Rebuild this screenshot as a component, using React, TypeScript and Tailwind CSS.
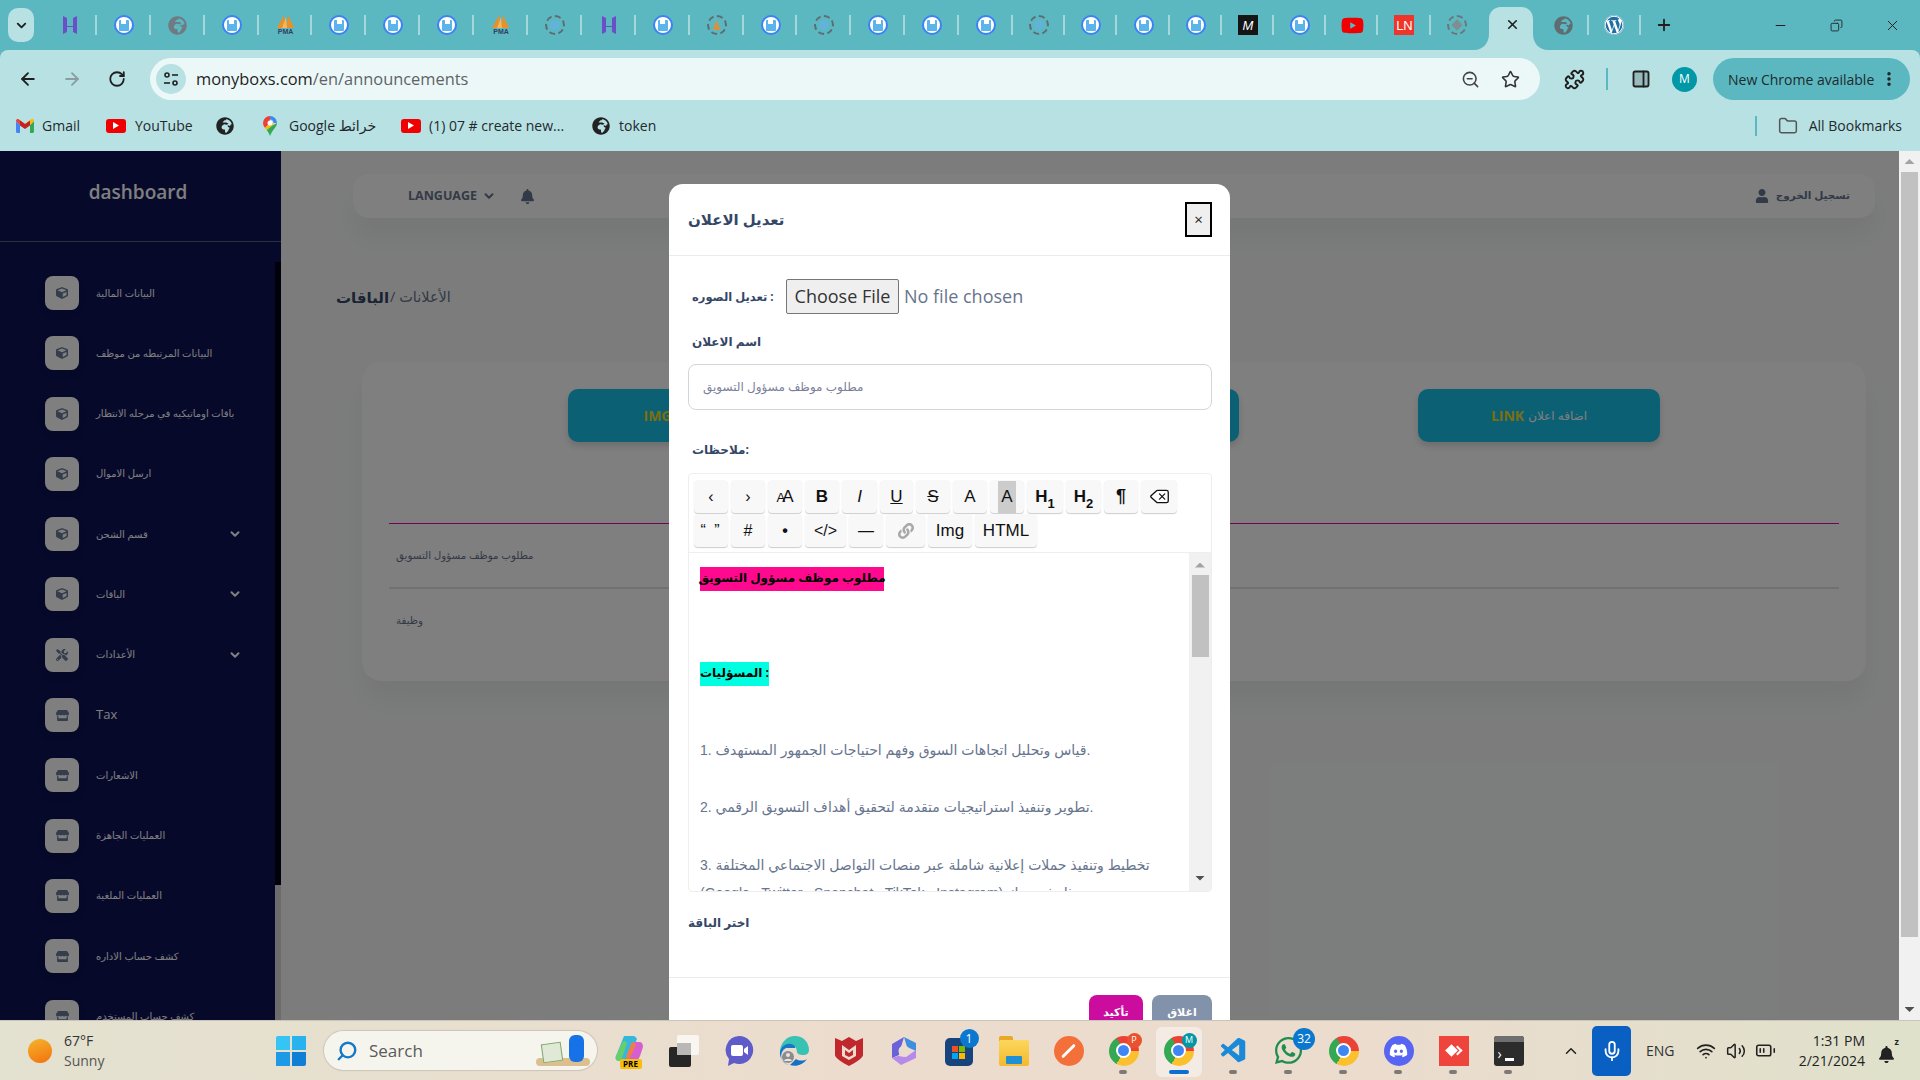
import { ArrowLeft, ArrowRight, RotateCw, Search, ZoomOut, Star, Puzzle, PanelRight, EllipsisVertical, Folder, Plus, Minus, X, Copy, ChevronDown, Delete, Mic, ChevronUp, Wifi, Volume2, BatteryMedium } from "lucide-react";
import { FaBell, FaUser, FaLink, FaCube, FaStore, FaTools, FaWhatsapp, FaDiscord, FaGlobeAfrica, FaWordpress, FaYoutube } from "react-icons/fa";
import { VscVscode } from "react-icons/vsc";

const FloppyIcon = () => (
  <div className="w-[20px] h-[20px] rounded-full bg-white border-2 border-[#3b82f6] flex items-center justify-center">
    <div className="w-[10px] h-[11px] bg-[#5bb5ea] rounded-[1px] flex justify-center">
      <div className="w-[5px] h-[4px] bg-white" />
    </div>
  </div>
);

const DashedIcon = () => (
  <div className="w-[20px] h-[20px] rounded-full border-2 border-dashed border-[#5f6b70] flex items-center justify-center">
    <div className="w-[10px] h-[10px] rounded-full bg-[#62b3d8]" />
  </div>
);

const HIcon = () => (
  <svg width="20" height="20" viewBox="0 0 20 20">
    <path d="M3 1l4 2v5h6V3l4-2v18l-4-2v-5H7v5l-4 2z" fill="#6a4fc9" />
    <path d="M7 8h6v3H7z" fill="#5bb8c1" />
  </svg>
);

const PmaIcon = () => (
  <div className="w-[20px] h-[22px] flex flex-col items-center">
    <svg width="20" height="14" viewBox="0 0 20 14">
      <path d="M1 14L8 1l1 13zM10 14l2-13 6 13z" fill="#e8902a" />
      <path d="M6 14l4-11 1 11z" fill="#f6b65a" />
    </svg>
    <span className="text-[7px] leading-[8px] font-bold text-[#33415c] font-['Liberation_Sans',sans-serif]">PMA</span>
  </div>
);

const tabs = ["h", "f", "g", "f", "p", "f", "f", "f", "p", "d", "h", "f", "d2", "f", "d", "f", "f", "f", "d", "f", "f", "f", "m", "f", "y", "l", "d3"];

const TabIcon = ({ kind }: { kind: string }) => {
  if (kind === "h") return <HIcon />;
  if (kind === "f") return <FloppyIcon />;
  if (kind === "g") return <FaGlobeAfrica size={19} className="text-[#6f7b80]" />;
  if (kind === "p") return <PmaIcon />;
  if (kind === "d") return <DashedIcon />;
  if (kind === "d2")
    return (
      <div className="w-[20px] h-[20px] rounded-full border-2 border-dashed border-[#5f6b70] flex items-center justify-center">
        <div className="w-[8px] h-[10px] bg-[#d9913f] [clip-path:polygon(50%_0,100%_100%,0_100%)]" />
      </div>
    );
  if (kind === "d3")
    return (
      <div className="w-[20px] h-[20px] rounded-full border-2 border-dashed border-[#6d7578] flex items-center justify-center">
        <div className="w-[8px] h-[8px] bg-[#7f8f8f] rotate-45" />
      </div>
    );
  if (kind === "m")
    return (
      <div className="w-[20px] h-[20px] bg-[#151515] flex items-center justify-center text-white text-[13px] italic font-['Liberation_Sans',sans-serif] leading-none">
        M
      </div>
    );
  if (kind === "y") return <FaYoutube size={23} className="text-[#f00000]" />;
  return (
    <div className="w-[20px] h-[20px] bg-[#f0342a] flex items-center justify-center text-white text-[13px] font-['Liberation_Sans',sans-serif] leading-none">
      LN
    </div>
  );
};

const TabBar = () => (
  <div className="h-[50px] bg-[#5bb8c1] flex items-start relative shrink-0">
    <div className="w-[43px] h-full flex items-start pt-[8px] pl-[8px]">
      <div className="w-[26px] h-[34px] rounded-[10px] bg-[#b8e1e4] flex items-center justify-center">
        <ChevronDown size={15} strokeWidth={3} className="text-[#1f1f1f]" />
      </div>
    </div>
    {tabs.map((t, i) => (
      <div key={i} className={`${i < 18 ? "w-[53.9px]" : "w-[52.2px]"} h-full flex items-center justify-center relative`}>
        <TabIcon kind={t} />
        {i < tabs.length - 1 && <div className="absolute right-0 top-[15px] h-[20px] w-[2px] bg-[#a5d7da]" />}
      </div>
    ))}
    <div className="w-[57px] h-full relative">
      <svg className="absolute left-[-9px] top-[7px]" width="74" height="43" viewBox="0 0 74 43">
        <path d="M0 43C9 43 15 36 15 27V12C15 5 20 0 27 0H47C54 0 59 5 59 12V27C59 36 65 43 74 43Z" fill="#b8e1e4" />
      </svg>
      <X size={15} strokeWidth={2.6} className="absolute left-[22px] top-[17px] text-[#1f1f1f]" />
    </div>
    <div className="w-[47px] h-full flex items-center justify-center">
      <FaGlobeAfrica size={19} className="text-[#5f6d72]" />
    </div>
    <div className="w-[54px] h-full flex items-center justify-center relative">
      <div className="absolute left-0 top-[15px] h-[20px] w-[2px] bg-[#a5d7da]" />
      <FaWordpress size={20} className="text-[#1f6fa3] bg-white rounded-full" />
      <div className="absolute right-0 top-[15px] h-[20px] w-[2px] bg-[#a5d7da]" />
    </div>
    <div className="w-[46px] h-full flex items-center justify-center">
      <Plus size={18} strokeWidth={2.4} className="text-[#1f1f1f]" />
    </div>
    <div className="ml-auto flex h-full items-center text-[#1f1f1f]">
      <div className="w-[56px] flex justify-center">
        <Minus size={15} strokeWidth={1.6} />
      </div>
      <div className="w-[56px] flex justify-center">
        <Copy size={13} strokeWidth={1.6} className="scale-x-[-1]" />
      </div>
      <div className="w-[56px] flex justify-center">
        <X size={17} strokeWidth={1.4} />
      </div>
    </div>
  </div>
);

const SiteInfoIcon = () => (
  <svg width="16" height="16" viewBox="0 0 16 16" fill="none" stroke="#222" strokeWidth="1.6">
    <circle cx="4" cy="4" r="2" />
    <path d="M9 4h6" />
    <path d="M1 12h6" />
    <circle cx="12" cy="12" r="2" />
  </svg>
);

const Toolbar = () => (
  <div className="h-[50px] bg-[#b8e1e4] flex items-start pt-[8px] relative shrink-0 rounded-t-[8px]">
    <div className="w-[150px] flex items-center h-[42px] pl-[18px] text-[#1f1f1f]">
      <ArrowLeft size={20} strokeWidth={2.2} />
      <ArrowRight size={20} strokeWidth={2.2} className="ml-[24px] text-[#8a9ea1]" />
      <RotateCw size={18} strokeWidth={2.4} className="ml-[26px]" />
    </div>
    <div className="w-[1390px] h-[42px] rounded-full bg-[#ecf8f8] flex items-center pl-[6px] pr-[20px]">
      <div className="w-[30px] h-[30px] rounded-full bg-[#b8e1e4] flex items-center justify-center">
        <SiteInfoIcon />
      </div>
      <span className="ml-[10px] text-[16.4px] text-[#1f1f1f] font-['Open_Sans',sans-serif]">
        monyboxs.com<span className="text-[#5f6368]">/en/announcements</span>
      </span>
      <ZoomOut size={19} strokeWidth={2} className="ml-auto text-[#444]" />
      <Star size={19} strokeWidth={2} className="ml-[21px] text-[#333]" />
    </div>
    <div className="flex items-center h-[42px] ml-[24px]">
      <Puzzle size={21} strokeWidth={2.2} className="text-[#1f1f1f]" />
      <div className="w-[2px] h-[22px] bg-[#5bb8c1] ml-[21px]" />
      <PanelRight size={20} strokeWidth={2.2} className="ml-[23px] text-[#1f1f1f] fill-[#1f1f1f]/20" />
      <div className="w-[25px] h-[25px] rounded-full bg-[#0097a7] ml-[21px] text-white text-[12px] flex items-center justify-center font-['Open_Sans',sans-serif]">
        M
      </div>
      <div className="w-[197px] h-[42px] ml-[16px] rounded-full bg-[#5bb8c1] flex items-center pl-[15px] text-[14px] text-[#1f2a2c] font-['Open_Sans',sans-serif]">
        New Chrome available
        <EllipsisVertical size={18} strokeWidth={2.6} className="ml-[6px] text-[#1f1f1f]" />
      </div>
    </div>
  </div>
);

const GmailIcon = () => (
  <svg width="18" height="14" viewBox="0 0 18 14">
    <path d="M0 2v10.5A1.5 1.5 0 0 0 1.5 14H4V6z" fill="#4285f4" />
    <path d="M14 6v8h2.5a1.5 1.5 0 0 0 1.500-1.500V2z" fill="#34a853" />
    <path d="M4 6L0 2c0-2 2-2.500 3-1.500L9 5l-1 4z" fill="#ea4335" />
    <path d="M14 6l4-4c0-2-2-2.500-3-1.500L9 5v4z" fill="#fbbc05" />
    <path d="M4 1.500v5L9 10l5-3.500v-5L9 5z" fill="#c5221f" />
  </svg>
);

const YtIcon = () => (
  <div className="w-[20px] h-[14px] bg-[#f00000] rounded-[3px] flex items-center justify-center">
    <div className="w-[6px] h-[7px] bg-white [clip-path:polygon(0_0,100%_50%,0_100%)]" />
  </div>
);

const MapsPin = () => (
  <svg width="14" height="20" viewBox="0 0 14 20">
    <path d="M7 0a7 7 0 0 0-7 7c0 2 1 3.500 2 5l5-5V3.500z" fill="#ea4335" />
    <path d="M7 0v3.500A3.500 3.500 0 0 1 10.500 7L14 7a7 7 0 0 0-7-7z" fill="#4285f4" />
    <path d="M2 12l5-5 3.500 0c0 1-.5 2-1 2.500L3.800 14z" fill="#fbbc05" />
    <path d="M9.500 9.500L14 7c0 4-5 7-7 13-.5-2-2-4-3.200-6z" fill="#34a853" />
    <circle cx="7" cy="7" r="2.500" fill="#fff" />
  </svg>
);

const BookmarkBar = () => (
  <div className="h-[51px] bg-[#b8e1e4] flex items-center text-[14px] text-[#1f2a2c] font-['Open_Sans','DejaVu_Sans',sans-serif] shrink-0">
    <div className="ml-[16px]">
      <GmailIcon />
    </div>
    <span className="ml-[8px] w-[64px]">Gmail</span>
    <YtIcon />
    <span className="ml-[9px] w-[81px]">YouTube</span>
    <FaGlobeAfrica size={18} className="text-[#222]" />
    <div className="ml-[29px]">
      <MapsPin />
    </div>
    <span className="ml-[12px] w-[112px]">Google خرائط</span>
    <YtIcon />
    <span className="ml-[8px] w-[163px]">(1) 07 # create new...</span>
    <FaGlobeAfrica size={18} className="text-[#222]" />
    <span className="ml-[9px]">token</span>
    <div className="ml-auto flex items-center">
      <div className="w-[2px] h-[20px] bg-[#5bb8c1]" />
      <Folder size={20} strokeWidth={1.8} className="ml-[21px] text-[#555]" />
      <span className="ml-[11px] mr-[18px]">All Bookmarks</span>
    </div>
  </div>
);

const sideItems = [
  { label: "البيانات المالية", icon: "cube" },
  { label: "البيانات المرتبطه من موظف", icon: "cube" },
  { label: "باقات اوماتيكيه في مرحله الانتظار", icon: "cube" },
  { label: "ارسل الاموال", icon: "cube" },
  { label: "قسم الشحن", icon: "cube", arrow: true },
  { label: "الباقات", icon: "cube", arrow: true },
  { label: "الأعدادات", icon: "tools", arrow: true },
  { label: "Tax", icon: "store" },
  { label: "الاشعارات", icon: "store" },
  { label: "العمليات الجاهزة", icon: "store" },
  { label: "العمليات الملغية", icon: "store" },
  { label: "كشف حساب الاداره", icon: "store" },
  { label: "كشف حساب المستخدم", icon: "store" },
];

const Sidebar = () => (
  <div className="w-[281px] h-full bg-[#0e1256] flex flex-col shrink-0">
    <div className="h-[91px] border-b border-[#5a5c7c] flex items-center justify-center pr-[5px] pb-[8px] shrink-0">
      <span className="text-[19px] font-semibold text-white font-['Open_Sans',sans-serif]">dashboard</span>
    </div>
    <div className="flex-1 flex mt-[20px] min-h-0">
      <div className="flex-1 overflow-hidden pt-[14px] pl-[45px] flex flex-col gap-[26.3px]">
        {sideItems.map((item) => (
          <div key={item.label} className="flex items-center h-[34px] shrink-0">
            <div className="w-[34px] h-[34px] rounded-[8px] bg-white shadow-[0_4px_6px_rgba(0,0,0,0.12)] flex items-center justify-center text-[#6b7a99]">
              {item.icon === "cube" && <FaCube size={12} />}
              {item.icon === "tools" && <FaTools size={12} />}
              {item.icon === "store" && <FaStore size={13} />}
            </div>
            <span className="ml-[17px] text-[10px] text-white font-['Open_Sans','DejaVu_Sans',sans-serif] whitespace-nowrap">
              {item.label === "Tax" ? <span className="text-[13px]">Tax</span> : item.label}
            </span>
            {item.arrow && <ChevronDown size={14} strokeWidth={3.5} className="ml-auto mr-[33px] text-white" />}
          </div>
        ))}
      </div>
      <div className="w-[6px] flex flex-col shrink-0">
        <div className="h-[623px] bg-[#020318] shrink-0" />
        <div className="flex-1 bg-[#d8d8d8]" />
      </div>
    </div>
  </div>
);

const AddButton = ({ kind, className }: { kind: string; className?: string }) => (
  <div className={`w-[242px] h-[53px] rounded-[10px] bg-[#17c1e8] shadow-[0_4px_7px_rgba(0,0,0,0.15)] flex items-center justify-center gap-[4px] font-['Open_Sans','DejaVu_Sans',sans-serif] text-[12px] text-white ${className ?? ""}`}>
    <span className="text-[14px] font-bold text-[#f5de1e]">{kind}</span>
    <span>اضافه اعلان</span>
  </div>
);

const MainContent = () => (
  <div className="flex-1 min-w-0 h-full bg-[#f8f9fa] font-['Open_Sans','DejaVu_Sans',sans-serif] overflow-hidden">
    <div className="ml-[72px] mr-[24px] mt-[23px] h-[44px] rounded-[16px] bg-white shadow-[0_20px_27px_0_rgba(0,0,0,0.05)] flex items-center text-[#67748e]">
      <span className="ml-[55px] text-[12.5px] font-bold">LANGUAGE</span>
      <ChevronDown size={14} strokeWidth={3.5} className="ml-[5px]" />
      <FaBell size={15} className="ml-[24px]" />
      <FaUser size={14} className="ml-auto" />
      <span className="ml-[7px] mr-[25px] text-[10.5px] font-bold">تسجيل الخروج</span>
    </div>
    <div className="ml-[55px] mt-[62px] h-[34px] flex items-center">
      <span className="text-[15px] font-bold text-[#344767]">الباقات</span>
      <span className="ml-[1px] text-[14.5px] text-[#67748e]">/ الأعلانات</span>
    </div>
    <div className="ml-[81px] mr-[33px] mt-[48px] h-[319px] rounded-[20px] bg-white shadow-[0_20px_27px_0_rgba(0,0,0,0.05)] px-[27px] pt-[27px]">
      <div className="flex pl-[179px]">
        <AddButton kind="IMG" className="mr-[187px]" />
        <AddButton kind="VIDEO" className="mr-[179px]" />
        <AddButton kind="LINK" />
      </div>
      <div className="mt-[81px] h-[66px] border-t border-[#d80caa] border-b-2 border-b-[#dee2e6] flex items-center pl-[7px] text-[10.3px] text-[#67748e]">
        مطلوب موظف مسؤول التسويق
      </div>
      <div className="h-[64px] flex items-center pl-[7px] text-[10.3px] text-[#67748e]">وظيفة</div>
    </div>
  </div>
);

const PageScrollbar = () => (
  <div className="w-[21px] h-full bg-[#f1f1f1] flex flex-col items-center shrink-0 relative z-20">
    <div className="h-[21px] flex items-center justify-center">
      <div className="w-[10px] h-[5px] bg-[#a3a3a3] [clip-path:polygon(50%_0,100%_100%,0_100%)]" />
    </div>
    <div className="w-[17px] h-[765px] bg-[#c1c1c1]" />
    <div className="mt-auto h-[21px] flex items-center justify-center">
      <div className="w-[10px] h-[5px] bg-[#505050] [clip-path:polygon(0_0,100%_0,50%_100%)]" />
    </div>
  </div>
);

const toolButtons = [
  { c: <span className="text-[16px]">‹</span>, w: "w-[34px]" },
  { c: <span className="text-[16px]">›</span>, w: "w-[34px]" },
  { c: <span className="text-[17px] tracking-[-3px] pr-[3px]"><span className="text-[13px]">A</span>A</span>, w: "w-[34px]" },
  { c: <span className="text-[17px] font-bold">B</span>, w: "w-[34px]" },
  { c: <span className="text-[17px] italic">I</span>, w: "w-[35px]" },
  { c: <span className="text-[17px] underline">U</span>, w: "w-[33px]" },
  { c: <span className="text-[17px] line-through">S</span>, w: "w-[34px]" },
  { c: <span className="text-[17px]">A</span>, w: "w-[34px]" },
  { c: <span className="text-[17px] bg-[#cccccc] px-[3px] h-[32px] flex items-center">A</span>, w: "w-[34px]" },
  { c: <span className="text-[17px] font-bold">H<sub className="text-[13px] align-[-3px]">1</sub></span>, w: "w-[36px]" },
  { c: <span className="text-[17px] font-bold">H<sub className="text-[13px] align-[-3px]">2</sub></span>, w: "w-[35px]" },
  { c: <span className="text-[18px] font-bold">¶</span>, w: "w-[34px]" },
  { c: <Delete size={21} strokeWidth={1.5} className="fill-white" />, w: "w-[36px]" },
  { c: <span className="text-[16px] tracking-[2px]">“ ”</span>, w: "w-[34px]" },
  { c: <span className="text-[16px]">#</span>, w: "w-[34px]" },
  { c: <span className="text-[16px] font-bold">•</span>, w: "w-[34px]" },
  { c: <span className="text-[16px]">&lt;/&gt;</span>, w: "w-[41px]" },
  { c: <span className="text-[16px]">—</span>, w: "w-[34px]" },
  { c: <FaLink size={16} className="text-[#a8a8a8]" />, w: "w-[39px]" },
  { c: <span className="text-[17px]">Img</span>, w: "w-[44px]" },
  { c: <span className="text-[17px]">HTML</span>, w: "w-[62px]" },
];

const EditorScrollbar = () => (
  <div className="w-[22px] h-full bg-[#f1f1f1] flex flex-col items-center shrink-0">
    <div className="h-[22px] flex items-center justify-center pt-[2px]">
      <div className="w-[10px] h-[5px] bg-[#a3a3a3] [clip-path:polygon(50%_0,100%_100%,0_100%)]" />
    </div>
    <div className="w-[17px] h-[82px] bg-[#c1c1c1]" />
    <div className="mt-auto h-[26px] flex items-center justify-center">
      <div className="w-[10px] h-[5px] bg-[#505050] [clip-path:polygon(0_0,100%_0,50%_100%)]" />
    </div>
  </div>
);

const Modal = () => (
  <div className="absolute left-[669px] top-[33px] w-[561px] h-[900px] bg-white rounded-t-[14px] z-20 font-['Open_Sans','DejaVu_Sans',sans-serif] text-[#344767]">
    <div className="h-[72px] border-b border-[#e9ecef] flex items-center justify-between pl-[19px] pr-[18px]">
      <span className="text-[15px] font-bold">تعديل الاعلان</span>
      <button className="w-[27px] h-[35px] bg-[#efefef] border-2 border-black text-[#222] text-[15px] flex items-center justify-center">
        ×
      </button>
    </div>
    <div className="pl-[19px] pr-[18px]">
      <div className="flex items-center mt-[23px] h-[35px] pl-[4px]">
        <span className="w-[89px] text-[11.5px] font-bold whitespace-nowrap">تعديل الصوره :</span>
        <button className="ml-[5px] w-[113px] h-[35px] bg-[#efefef] border border-[#767676] rounded-[2px] text-[18px] text-[#333]">
          Choose File
        </button>
        <span className="ml-[5px] text-[18px] text-[#67748e]">No file chosen</span>
      </div>
      <div className="mt-[18px] pl-[4px] text-[12px] font-bold h-[20px] leading-[20px]">اسم الاعلان</div>
      <div className="mt-[12px] h-[46px] rounded-[8px] border border-[#d2d6da] flex items-center pl-[14px] text-[12px] text-[#7b809a]">
        مطلوب موظف مسؤول التسويق
      </div>
      <div className="mt-[30px] pl-[4px] text-[12px] font-bold h-[20px] leading-[20px]">ملاحظات:</div>
      <div className="mt-[13px] h-[419px] border border-[#eeeeee] rounded-[4px] flex flex-col overflow-hidden">
        <div className="h-[79px] border-b border-[#eeeeee] px-[5px] pt-[6px] flex flex-wrap gap-x-[3px] gap-y-[1px] content-start shrink-0 font-['Liberation_Sans',sans-serif] text-[#111]">
          {toolButtons.map((b, i) => (
            <div key={i} className={`${b.w} h-[33px] bg-[#f8f8f8] rounded-[4px] shadow-[0_1px_1px_rgba(0,0,0,0.2)] flex items-center justify-center`}>
              {b.c}
            </div>
          ))}
        </div>
        <div className="flex-1 flex min-h-0">
          <div className="flex-1 overflow-hidden pl-[11px] pt-[14px]">
            <div className="h-[24px] w-[184px] bg-[#ff0a8e] text-black font-bold text-[12px] leading-[22px] whitespace-nowrap flex justify-center">
              مطلوب موظف مسؤول التسويق
            </div>
            <div className="mt-[71px] h-[24px] w-[69px] bg-[#00ffe0] text-black font-bold text-[12px] leading-[22px] whitespace-nowrap flex justify-center">
              المسؤليات :
            </div>
            <div className="text-[14px] text-[#67748e] whitespace-nowrap font-['Liberation_Sans','DejaVu_Sans',sans-serif]">
              <div className="mt-[50px] h-[28px] leading-[28px]">1. قياس وتحليل اتجاهات السوق وفهم احتياجات الجمهور المستهدف.</div>
              <div className="mt-[29px] h-[28px] leading-[28px]">2. تطوير وتنفيذ استراتيجيات متقدمة لتحقيق أهداف التسويق الرقمي.</div>
              <div className="mt-[30px] h-[28px] leading-[28px]">3. تخطيط وتنفيذ حملات إعلانية شاملة عبر منصات التواصل الاجتماعي المختلفة</div>
              <div className="h-[28px] leading-[28px]">(Google , Twitter , Snapchat , TikTok , Instagram) مثل فيسبوك</div>
            </div>
          </div>
          <EditorScrollbar />
        </div>
      </div>
      <div className="mt-[21px] text-[12px] font-bold h-[20px] leading-[20px]">اختر الباقة</div>
    </div>
    <div className="mt-[44px] border-t border-[#e9ecef] pt-[17px] pr-[18px] flex justify-end gap-[9px] text-[11px] font-bold text-white">
      <div className="w-[54px] h-[40px] rounded-[8px] bg-[#cb0c9f] flex items-center justify-center pb-[6px]">تأكيد</div>
      <div className="w-[60px] h-[40px] rounded-[8px] bg-[#8392ab] flex items-center justify-center pb-[6px]">اغلاق</div>
    </div>
  </div>
);

const ChromeLogo = ({ badge, badgeColor }: { badge?: string; badgeColor?: string }) => (
  <div className="w-[30px] h-[30px] rounded-full relative flex items-center justify-center bg-[conic-gradient(from_-30deg,#ea4335_0deg_120deg,#fbc02d_120deg_240deg,#34a853_240deg_360deg)]">
    <div className="w-[15px] h-[15px] rounded-full bg-[#3f86f4] border-[2px] border-white" />
    {badge && (
      <div className={`absolute -right-[3px] -top-[3px] w-[15px] h-[15px] rounded-full text-white text-[9px] flex items-center justify-center ${badgeColor}`}>
        {badge}
      </div>
    )}
  </div>
);

const TaskIcon = ({ children, dot, active }: { children: React.ReactNode; dot?: boolean; active?: boolean }) => (
  <div className="w-[55px] h-full flex items-center justify-center relative">
    {active && <div className="absolute left-[5px] top-[6px] w-[46px] h-[50px] rounded-[6px] bg-[#f4ece4] shadow-[2px_0_0_#e6ddd2]" />}
    <div className="relative">{children}</div>
    {dot && <div className="absolute bottom-[6px] left-[23px] w-[8px] h-[4px] rounded-full bg-[#7d7a76]" />}
    {active && <div className="absolute bottom-[6px] left-[18px] w-[20px] h-[4px] rounded-full bg-[#0a6fd0]" />}
  </div>
);

const Taskbar = () => (
  <div className="h-[60px] border-t border-[#c9c5bc] shrink-0 flex items-center bg-[linear-gradient(90deg,#e3e1cf_0%,#e8dfcf_25%,#ecdcce_45%,#ecdcce_70%,#dfe1cb_100%)] font-['Open_Sans',sans-serif] text-[#333] relative z-30">
    <div className="ml-[28px] w-[24px] h-[24px] rounded-full bg-[linear-gradient(160deg,#f5b52a,#f3700f)]" />
    <div className="ml-[12px] w-[199px] flex flex-col leading-[20px] text-[14px]">
      <span>67°F</span>
      <span className="text-[#555]">Sunny</span>
    </div>
    <div className="w-[56px] flex justify-center">
      <div className="w-[30px] h-[30px] grid grid-cols-2 gap-[2px]">
        <div className="bg-[#35c4f3] rounded-tl-[2px]" />
        <div className="bg-[#28b2ee]" />
        <div className="bg-[#1d9ae6]" />
        <div className="bg-[#0f7fd6] rounded-br-[2px]" />
      </div>
    </div>
    <div className="ml-[5px] w-[273px] h-[39px] rounded-full bg-[#f5f5ee] shadow-[0_0_1px_1px_rgba(0,0,0,0.12)] flex items-center pl-[12px] relative">
      <Search size={22} strokeWidth={2.6} className="text-[#1478c8] scale-x-[-1]" />
      <span className="ml-[11px] text-[17px] text-[#5a5a5a]">Search</span>
      <div className="absolute right-[7px] bottom-[4px] w-[54px] h-[28px]">
        <div className="absolute left-0 bottom-0 w-[54px] h-[8px] rounded-full bg-[#dcbf8e]" />
        <div className="absolute left-[6px] bottom-[4px] w-[20px] h-[19px] bg-[#dfe9d6] border border-[#7fa66f] rotate-[-8deg]" />
        <div className="absolute left-[33px] bottom-[4px] w-[15px] h-[27px] rounded-[6px] bg-[#1672e6]" />
      </div>
    </div>
    <div className="ml-[4px] flex h-full">
      <TaskIcon>
        <svg width="30" height="28" viewBox="0 0 30 28" className="-mt-[4px]">
          <path d="M10 1h9c2 0 3 1 4 3l-8 19c-1 2-2 3-4 3H5c-3 0-4-3-3-5z" fill="#35b8dc" />
          <path d="M2 21l6-13c2-3 4-2 5 0L7 26H5c-3 0-4-3-3-5z" fill="#66cf6c" />
          <path d="M18 7h7c3 0 4 2 4 5l-3 9c-1 3-3 5-6 5h-9c2 0 3-1 4-3z" fill="#d65fd0" />
          <path d="M18 7c3 0 4 2 3 5l-5 11c-1 2-2 3-4 3l1-7z" fill="#ef7d4a" />
        </svg>
        <div className="absolute -bottom-[6px] left-[6px] w-[22px] h-[10px] rounded-[2px] bg-[#f7bd0e] text-[8px] leading-[10px] text-center font-bold text-black">PRE</div>
      </TaskIcon>
      <TaskIcon>
        <div className="w-[30px] h-[32px] relative">
          <div className="absolute left-0 bottom-0 w-[22px] h-[20px] rounded-[2px] bg-[#262626]" />
          <div className="absolute right-0 top-0 w-[22px] h-[20px] rounded-[2px] bg-white/70" />
          <div className="absolute left-[8px] top-[8px] w-[14px] h-[12px] bg-[#b9b8b6]" />
        </div>
      </TaskIcon>
      <TaskIcon>
        <svg width="30" height="32" viewBox="0 0 30 32">
          <path d="M15 1a14 14 0 1 1-5 27l-6 3 1-7A14 14 0 0 1 15 1z" fill="#5f5bc8" />
          <rect x="7" y="10" width="12" height="11" rx="2" fill="#fff" />
          <path d="M20 14l4-3v9l-4-3z" fill="#fff" />
        </svg>
      </TaskIcon>
      <TaskIcon>
        <svg width="32" height="32" viewBox="0 0 32 32">
          <path d="M2 16C3 7 9 1 17 1c8 0 14 6 14 14 0 3-2 5-6 5-3 0-6-1-6-3 0-5-4-8-9-7-3 .5-6 3-8 6z" fill="#37c2b4" />
          <path d="M2 16c2-5 6-8 11-7 3 .5 5 3 4 4H8a9 9 0 0 0 4 17C6 29 1 23 2 16z" fill="#1578c8" />
          <path d="M12 30c6 2 13 0 17-6-3 2-8 2-11 0z" fill="#1472c4" />
          <circle cx="10" cy="22" r="6" fill="#8c8c8c" />
          <circle cx="10" cy="20" r="2" fill="#e6e6e6" />
          <path d="M6 26c1-3 7-3 8 0z" fill="#e6e6e6" />
        </svg>
      </TaskIcon>
      <TaskIcon>
        <svg width="28" height="30" viewBox="0 0 28 30">
          <path d="M0 2l7 3 7-4 7 4 7-3v17c0 3-8 8-14 11C8 27 0 22 0 19z" fill="#c1282d" />
          <path d="M7 9l7 5 7-5v11l-7 4-7-4z" fill="#ecdcce" />
          <path d="M10 14l4 3 4-3v5l-4 2-4-2z" fill="#c1282d" />
        </svg>
      </TaskIcon>
      <TaskIcon>
        <svg width="28" height="30" viewBox="0 0 28 30">
          <path d="M14 1l12 6v8l-9-4z" fill="#3f8fe0" />
          <path d="M2 8l12-7-3 10-2 8-7 3z" fill="#6a62d8" />
          <path d="M2 22l9 7 15-7v-8l-10 7-8-1z" fill="#b68ae8" />
          <circle cx="14" cy="15" r="5.500" fill="#ecdcce" />
        </svg>
      </TaskIcon>
      <TaskIcon>
        <div className="w-[28px] h-[28px] rounded-[5px] bg-[#17447c] flex items-center justify-center mt-[3px]">
          <div className="w-[13px] h-[13px] grid grid-cols-2 gap-[1px]">
            <div className="bg-[#f25022]" />
            <div className="bg-[#7fba00]" />
            <div className="bg-[#00a4ef]" />
            <div className="bg-[#ffb900]" />
          </div>
        </div>
        <div className="absolute -right-[6px] -top-[6px] w-[19px] h-[19px] rounded-full bg-[#0b78d0] text-white text-[12px] flex items-center justify-center">1</div>
      </TaskIcon>
      <TaskIcon>
        <div className="w-[30px] h-[30px] relative">
          <div className="absolute left-0 top-0 w-[14px] h-[6px] rounded-t-[2px] bg-[#e9a825]" />
          <div className="absolute left-0 top-[4px] w-[30px] h-[26px] bg-[linear-gradient(180deg,#fbd75c,#f5b92d)] rounded-[2px]" />
          <div className="absolute left-[7px] bottom-[2px] w-[16px] h-[8px] rounded-[1px] bg-[#1f8fd6]" />
        </div>
      </TaskIcon>
      <TaskIcon>
        <div className="w-[30px] h-[30px] rounded-full bg-[#f4703a] flex items-center justify-center">
          <div className="w-[3px] h-[18px] bg-white rotate-45 rounded-full" />
        </div>
      </TaskIcon>
      <TaskIcon dot>
        <ChromeLogo badge="P" badgeColor="bg-[#e8522d]" />
      </TaskIcon>
      <TaskIcon active>
        <ChromeLogo badge="M" badgeColor="bg-[#0097a7]" />
      </TaskIcon>
      <TaskIcon dot>
        <VscVscode size={30} className="text-[#1a8ad8]" />
      </TaskIcon>
      <TaskIcon dot>
        <FaWhatsapp size={31} className="text-[#1e8e4e]" />
        <div className="absolute -right-[11px] -top-[7px] w-[22px] h-[22px] rounded-full bg-[#0b78d0] text-white text-[12px] flex items-center justify-center">32</div>
      </TaskIcon>
      <TaskIcon dot>
        <ChromeLogo />
      </TaskIcon>
      <TaskIcon dot>
        <div className="w-[30px] h-[30px] rounded-full bg-[#5865f2] flex items-center justify-center">
          <FaDiscord size={19} className="text-white" />
        </div>
      </TaskIcon>
      <TaskIcon dot>
        <div className="w-[30px] h-[30px] bg-[#ef443b] flex items-center justify-center">
          <div className="w-[9px] h-[9px] bg-white rotate-45 -mr-[2px]" />
          <div className="w-[7px] h-[7px] border-t-2 border-r-2 border-white rotate-45" />
        </div>
      </TaskIcon>
      <TaskIcon dot>
        <div className="w-[30px] h-[30px] rounded-[3px] bg-[#2c2c2c] overflow-hidden">
          <div className="h-[6px] bg-[#6f6f6f]" />
          <div className="flex items-end h-[22px] pl-[4px] pb-[3px] text-white text-[14px] leading-none">›<span className="ml-[3px] w-[9px] h-[3px] bg-white" /></div>
        </div>
      </TaskIcon>
    </div>
    <ChevronUp size={18} strokeWidth={2} className="ml-[26px] text-[#222]" />
    <div className="ml-[12px] w-[39px] h-[50px] rounded-[5px] bg-[#0a5fc2] flex items-center justify-center">
      <Mic size={22} strokeWidth={2} className="text-white" />
    </div>
    <span className="ml-[15px] w-[30px] text-[14px] text-[#333]">ENG</span>
    <Wifi size={20} strokeWidth={2} className="ml-[20px] text-[#222]" />
    <Volume2 size={20} strokeWidth={1.8} className="ml-[10px] text-[#222]" />
    <BatteryMedium size={21} strokeWidth={1.8} className="ml-[9px] text-[#222]" />
    <div className="ml-auto flex flex-col items-end text-[14px] leading-[20px] text-[#222]">
      <span>1:31 PM</span>
      <span>2/21/2024</span>
    </div>
    <div className="ml-[12px] mr-[24px] relative w-[19px] h-[24px] flex items-end justify-center">
      <FaBell size={17} className="text-[#222]" />
      <span className="absolute -right-[3px] -top-[2px] text-[9px] leading-none font-bold text-[#222]">z</span>
    </div>
  </div>
);

const App = () => {
  return (
    <div className="w-[1920px] h-[1080px] overflow-hidden flex flex-col bg-[#5bb8c1]">
      <TabBar />
      <Toolbar />
      <BookmarkBar />
      <div className="flex-1 min-h-0 flex relative overflow-hidden">
        <div className="flex-1 min-w-0 flex relative">
          <Sidebar />
          <MainContent />
          <div className="absolute inset-0 bg-black/50" />
        </div>
        <PageScrollbar />
        <Modal />
      </div>
      <Taskbar />
    </div>
  );
};

export default App;
